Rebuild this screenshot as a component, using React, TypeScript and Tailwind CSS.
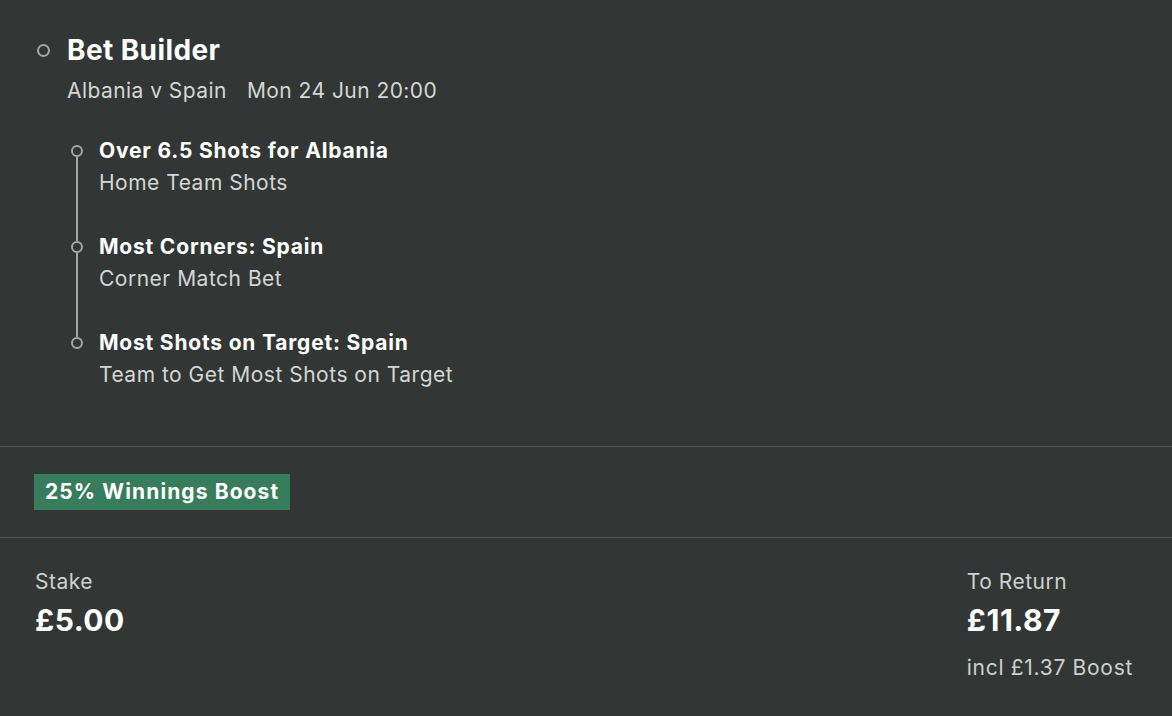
// Bet slip: bet builder summary

const legs = [
  { title: "Over 6.5 Shots for Albania", market: "Home Team Shots" },
  { title: "Most Corners: Spain", market: "Corner Match Bet" },
  { title: "Most Shots on Target: Spain", market: "Team to Get Most Shots on Target" },
];

function Ring({ size }: { size: "lg" | "sm" }) {
  return (
    <div
      className={`shrink-0 rounded-full border-2 border-[#a3a7a5] ${
        size === "lg" ? "w-[13px] h-[13px]" : "w-[12px] h-[12px]"
      }`}
    />
  );
}

function Leg({
  title,
  market,
  first,
  last,
}: {
  title: string;
  market: string;
  first: boolean;
  last: boolean;
}) {
  return (
    <div className="flex gap-[16px]">
      {/* timeline column */}
      <div className="flex flex-col items-center w-[12px] ml-[4px]">
        <div className={`w-[2px] h-[8px] ${first ? "" : "bg-[#a3a7a5]"}`} />
        <Ring size="sm" />
        {!last && <div className="w-[2px] flex-1 bg-[#a3a7a5]" />}
      </div>
      <div className={`flex flex-col gap-[4px] ${last ? "" : "pb-[36px]"}`}>
        <p className="text-[21px] leading-[28px] font-bold text-white tracking-[0.8px]">{title}</p>
        <p className="text-[21px] leading-[28px] text-[#d3d6d4] tracking-[0.5px]">{market}</p>
      </div>
    </div>
  );
}

export default function App() {
  return (
    <div
      className="w-[1172px] h-[716px] overflow-hidden bg-[#323735] text-white"
      style={{ fontFamily: "Inter, 'Noto Sans', sans-serif" }}
    >
      {/* Selection */}
      <div className="pt-[34px] pb-[57px] px-[34px]">
        <div className="flex items-center gap-[17px] ml-[3px]">
          <Ring size="lg" />
          <h1 className="text-[28px] leading-[32px] font-bold tracking-[0.4px]">Bet Builder</h1>
        </div>
        <p className="mt-[11px] ml-[33px] text-[21px] leading-[28px] text-[#d3d6d4] tracking-[0.45px]">
          Albania v Spain<span className="ml-[20px]">Mon 24 Jun 20:00</span>
        </p>

        <div className="mt-[32px] ml-[33px]">
          {legs.map((leg, i) => (
            <Leg
              key={leg.title}
              title={leg.title}
              market={leg.market}
              first={i === 0}
              last={i === legs.length - 1}
            />
          ))}
        </div>
      </div>

      <div className="h-[1px] bg-[#535856]" />

      {/* Boost */}
      <div className="px-[34px] pt-[27px] pb-[27px]">
        <span className="inline-block bg-[#377c5b] px-[11px] h-[36px] leading-[36px] text-[21px] font-bold text-white tracking-[1.1px]">
          25% Winnings Boost
        </span>
      </div>

      <div className="h-[1px] bg-[#535856]" />

      {/* Stake / returns */}
      <div className="flex justify-between pl-[35px] pr-[39px] pt-[30px]">
        <div className="flex flex-col">
          <p className="text-[21px] leading-[28px] text-[#cdd0ce] tracking-[0.5px]">Stake</p>
          <p className="mt-[4px] text-[30px] leading-[40px] font-bold text-white tracking-[0.5px]">£5.00</p>
        </div>
        <div className="flex flex-col">
          <p className="text-[21px] leading-[28px] text-[#cdd0ce] tracking-[0.5px]">To Return</p>
          <p className="mt-[4px] text-[30px] leading-[40px] font-bold text-white tracking-[0.5px]">£11.87</p>
          <p className="mt-[14px] text-[21px] leading-[28px] text-[#cdd0ce] tracking-[0.7px]">incl £1.37 Boost</p>
        </div>
      </div>
    </div>
  );
}
